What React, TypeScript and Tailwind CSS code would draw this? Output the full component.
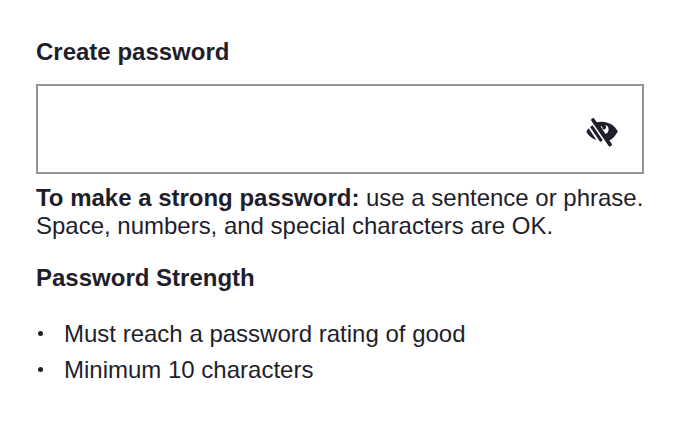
export default function App() {
  return (
    <main className="h-[426px] w-[680px] overflow-hidden bg-white px-9 pt-[38px] font-['Liberation_Sans',Arial,sans-serif] text-[24px] leading-7 text-[#1f1e2b]">
      <label htmlFor="password" className="block font-bold">Create password</label>
      <div className="mt-[18px] flex h-[90px] w-[608px] items-center border-2 border-[#949494] pr-6">
        <input id="password" type="password" className="h-full min-w-0 flex-1 bg-transparent px-4 outline-none" />
        <button type="button" aria-label="Show password" className="mt-[5px]">
          <svg width="32" height="30" viewBox="0 0 32 30" fill="none">
            <path d="M10 5.6C19 3.2 27.5 6.5 31.8 14.5C29.8 18.5 26.8 21.8 22.5 24L10 5.6Z" fill="#1f1e2b" />
            <path d="M14.6 9.5L19.5 17C22.1 16 23.3 13 22.2 10.5C21.7 9 20.6 8.2 19.3 8C20.7 10 20 12.2 18.3 12.4C16.7 12.6 16 11 16.3 9.2Z" fill="white" />
            <path d="M7 3L24 27.6" stroke="#1f1e2b" strokeWidth="3.7" strokeLinecap="round" />
            <path d="M5.3 9.2L15.5 24.2" stroke="#1f1e2b" strokeWidth="3.1" />
            <path d="M2.7 11.2L10.4 23C6 21.5 2.3 18.5 .3 14.7C1 13.3 1.7 12.2 2.7 11.2Z" fill="#1f1e2b" />
          </svg>
        </button>
      </div>
      <p className="mt-2.5 whitespace-nowrap tracking-[-0.01px]"><strong>To make a strong password:</strong> use a sentence or phrase.<br />Space, numbers, and special characters are OK.</p>
      <h2 className="mt-6 font-bold">Password Strength</h2>
      <ul className="mt-7 space-y-2">
        <li className="flex items-center"><span className="mb-px mr-[21px] ml-[2px] h-[5px] w-[5px] rounded-full bg-[#1f1e2b]" /><span>Must reach a password rating of good</span></li>
        <li className="flex items-center"><span className="mb-px mr-[21px] ml-[2px] h-[5px] w-[5px] rounded-full bg-[#1f1e2b]" /><span>Minimum 10 characters</span></li>
      </ul>
    </main>
  );
}
